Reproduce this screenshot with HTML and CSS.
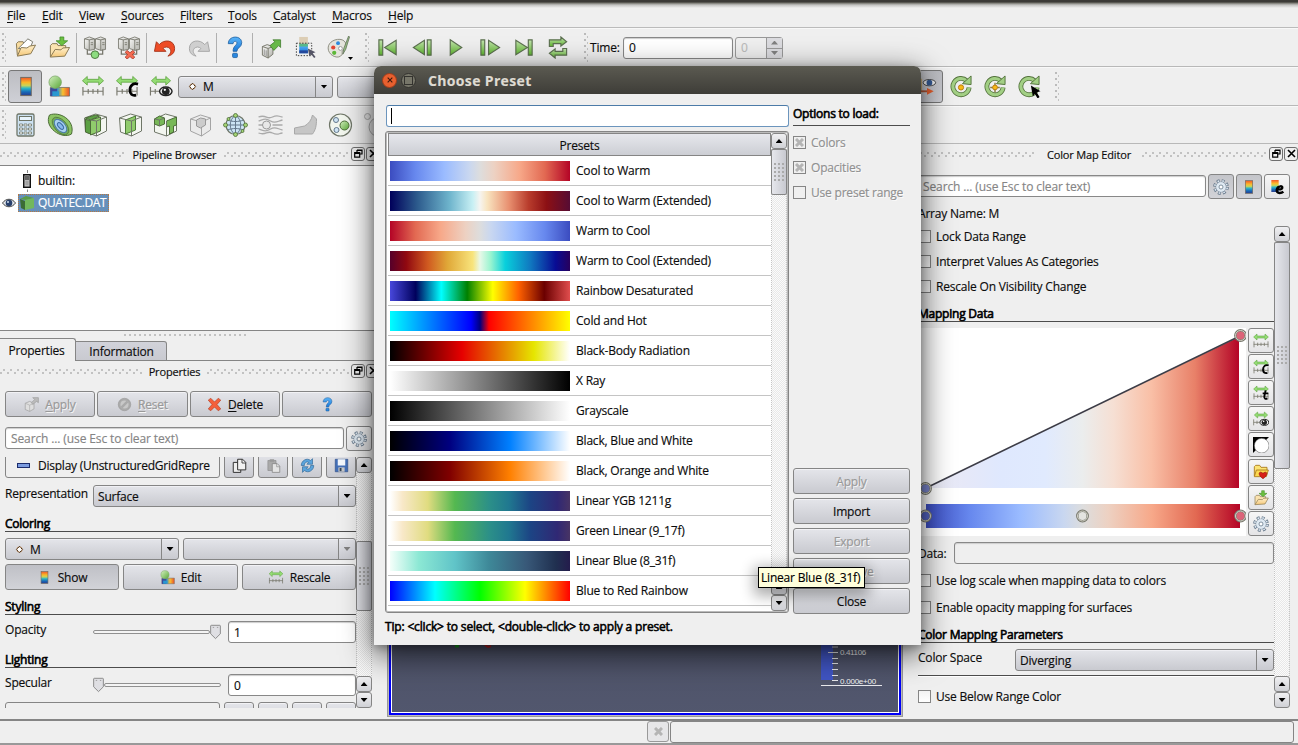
FILE: index.html
```html
<!DOCTYPE html>
<html lang="en">
<head>
<meta charset="utf-8">
<title>ParaView</title>
<link rel="stylesheet" href="styles.css">
</head>
<body>
<svg class="defs" width="0" height="0" aria-hidden="true">
  <defs>
    <linearGradient id="rain" x1="0" y1="0" x2="0" y2="1"><stop offset="0" stop-color="#f0562a"/><stop offset=".28" stop-color="#fbb829"/><stop offset=".45" stop-color="#c8d45a"/><stop offset=".6" stop-color="#2cb6c8"/><stop offset=".8" stop-color="#1668b8"/><stop offset="1" stop-color="#2a3c8c"/></linearGradient>
    <linearGradient id="rainh"><stop offset="0" stop-color="#3b3f9c"/><stop offset=".35" stop-color="#2a8fd0"/><stop offset=".65" stop-color="#f9c030"/><stop offset="1" stop-color="#e8502a"/></linearGradient>
    <linearGradient id="grn" x1="0" y1="0" x2="1" y2="1"><stop offset="0" stop-color="#d4f0c0"/><stop offset="1" stop-color="#5aa838"/></linearGradient>
    <linearGradient id="play" x1="0" y1="0" x2="0" y2="1"><stop offset="0" stop-color="#c4e4b0"/><stop offset="1" stop-color="#5eb52e"/></linearGradient>
    <linearGradient id="fold" x1="0" y1="0" x2="0" y2="1"><stop offset="0" stop-color="#fff0cc"/><stop offset="1" stop-color="#f5c878"/></linearGradient>
    <linearGradient id="gry" x1="0" y1="0" x2="1" y2="1"><stop offset="0" stop-color="#f8f8f6"/><stop offset="1" stop-color="#b4b4ae"/></linearGradient>
    <linearGradient id="blu" x1="0" y1="0" x2="0" y2="1"><stop offset="0" stop-color="#5ab4f8"/><stop offset="1" stop-color="#1a78d8"/></linearGradient>
    <linearGradient id="cw"><stop offset="0" stop-color="#3b4cc0"/><stop offset=".14" stop-color="#6788ee"/><stop offset=".3" stop-color="#9abbff"/><stop offset=".44" stop-color="#c9d7f0"/><stop offset=".5" stop-color="#ddd"/><stop offset=".58" stop-color="#edd1c2"/><stop offset=".72" stop-color="#f7a889"/><stop offset=".86" stop-color="#e26952"/><stop offset="1" stop-color="#b40426"/></linearGradient>
    <linearGradient id="cwa"><stop offset="0" stop-color="#ececf6"/><stop offset=".12" stop-color="#e6e8f8"/><stop offset=".24" stop-color="#dfe8fe"/><stop offset=".38" stop-color="#e0eafe"/><stop offset=".5" stop-color="#ebeded"/><stop offset=".6" stop-color="#f6dfd3"/><stop offset=".72" stop-color="#f9bfa6"/><stop offset=".86" stop-color="#e88068"/><stop offset="1" stop-color="#b40426"/></linearGradient>
  </defs>
  <symbol id="open" viewBox="0 0 24 24"><path d="M4 20 3 8l2-2h5l1 2" fill="#f8dca0" stroke="#87764f"/><path d="M5 13 15 3l5 3-3 8z" fill="#fff" stroke="#77776c"/><path d="M4 21 8 12l6 .5 3-2 6-1-5 9z" fill="url(#fold)" stroke="#87764f"/></symbol>
  <symbol id="load" viewBox="0 0 24 24"><path d="M3 22V10l2-2h5l1 2h8v3" fill="#fbe3b0" stroke="#87764f"/><path d="M3 22 8 14l6 .5 2-2 7-.5-5 9z" fill="url(#fold)" stroke="#87764f"/><path d="M13 1h4v4h4l-6 5-6-5h4z" fill="#6cc040" stroke="#3d8a26" stroke-width=".8"/></symbol>
  <symbol id="servers" viewBox="0 0 24 24"><g stroke="#77776c" stroke-width=".9"><path d="M1 3 6 1l5.500 2v11L6 15l-5-2z" fill="url(#gry)"/><path d="M12.500 3 18 1l5 2v11l-5 1-5.500-2z" fill="url(#gry)"/><path d="M6 4v11M18 4v11M1 3l5 1 5.500-1M12.500 3l5.500 1 5-1M7.500 7h2.500M19.500 7h2.500M7.500 9h2.500M19.500 9h2.500" fill="none"/><path d="M4 14v5h16v-5" fill="none" stroke-width="1.300"/></g></symbol>
  <symbol id="connect" viewBox="0 0 24 24"><use href="#servers"/><circle cx="12" cy="19.500" r="4" fill="#8cdc80" stroke="#4c7840"/></symbol>
  <symbol id="disconnect" viewBox="0 0 24 24"><use href="#servers"/><path d="m8 17 2-2 3 2.500L16 15l2 2-2.500 2.500L18 22l-2 2-3-2.500-3 2.500-2-2 2.500-2.500z" fill="#f46a50" stroke="#a83020" stroke-width=".8"/></symbol>
  <symbol id="undo" viewBox="0 0 24 24"><path d="M1 16 3 6l3 3c5-6 16-5 16 4 0 5-3 7-7 8 3-3 4-5 2-8-2-2-5-2-7 0l3 3z" fill="#ee4c26" stroke="#a8361c"/></symbol>
  <symbol id="redo" viewBox="0 0 24 24"><path d="M23 16 21 6l-3 3C13 3 2 4 2 13c0 5 3 7 7 8-3-3-4-5-2-8 2-2 5-2 7 0l-3 3z" fill="#cfcfcf" stroke="#a5a5a5"/></symbol>
  <symbol id="help" viewBox="0 0 24 24"><path d="M5 8c0-9 14-9 14-1 0 5-5 5-5 9h-4c0-6 4-6 4-9 0-2-4-2-4 1z" fill="url(#blu)" stroke="#1c5c9c" stroke-width=".8"/><rect x="9.500" y="18" width="5" height="4.500" rx="1" fill="#2a88e0" stroke="#1c5c9c" stroke-width=".8"/></symbol>
  <symbol id="extract" viewBox="0 0 24 24"><path d="m3 11 5-2 6 2v8l-5 4-6-3z" fill="url(#gry)" stroke="#77776c"/><path d="m3 11 6 2 5-2M9 13v10" fill="none" stroke="#77776c"/><path d="M5 14v6M7 15v6" stroke="#999"/><path d="m11 10 5-4-2-2h8v8l-2-2-5 5z" fill="#67b848" stroke="#3d7a2a" stroke-width=".8"/></symbol>
  <symbol id="select" viewBox="0 0 24 24"><rect x="6" y="1" width="9" height="8" fill="#dccdb4"/><rect x="6" y="9" width="9" height="9" fill="url(#blu)"/><rect x="6" y="8" width="9" height="3" fill="#58b888"/><rect x="6" y="15" width="9" height="3" fill="#24489c"/><path d="M3 7.500h16v13H3z" fill="none" stroke="#333" stroke-dasharray="1.500 1.500"/><path d="m15 13 8 4-3 1 3 4-1.500 1-3-4-2 2z" fill="#556"/></symbol>
  <symbol id="palette" viewBox="0 0 24 24"><path d="M1 15C-1 8 6 3 13 3.500c7 .5 8 8 4 11-3 1-1 3-2 5-3 5-12 2-14-4.500z" fill="#e4e4dc" stroke="#8c8c80"/><circle cx="6" cy="12" r="2.200" fill="#e44430"/><circle cx="11" cy="7.500" r="2" fill="#2b8ae0"/><circle cx="7" cy="17.500" r="2.200" fill="#5cb838"/><circle cx="13.500" cy="13" r="2" fill="#fff" stroke="#999"/><path d="m22 0-5 13-1 6 3-5 4-13z" fill="#96bc84" stroke="#55644c" stroke-width=".7"/></symbol>
  <symbol id="play1" viewBox="0 0 24 24"><path d="m6 4 12 8-12 8z" fill="url(#play)" stroke="#5c7050" stroke-width="1.200"/></symbol>
  <symbol id="first" viewBox="0 0 24 24"><path d="M2.500 4h4v16h-4zM20.500 4.500v15L8.500 12z" fill="url(#play)" stroke="#5c7050" stroke-width="1.200"/></symbol>
  <symbol id="back" viewBox="0 0 24 24"><path d="M17.500 4h4v16h-4zM14.500 4.500v15L3 12z" fill="url(#play)" stroke="#5c7050" stroke-width="1.200"/></symbol>
  <symbol id="fwd" viewBox="0 0 24 24"><path d="M2.500 4h4v16h-4zM10.500 4.500v15L22 12z" fill="url(#play)" stroke="#5c7050" stroke-width="1.200"/></symbol>
  <symbol id="last" viewBox="0 0 24 24"><path d="M16.500 4h4v16h-4zM3.500 4.500v15L15.500 12z" fill="url(#play)" stroke="#5c7050" stroke-width="1.200"/></symbol>
  <symbol id="loop" viewBox="0 0 24 24"><path d="M3 11V4h12V1l6 5-6 4.500V8H7v3z" fill="url(#play)" stroke="#5c7050" stroke-width="1.200"/><path d="M21 13v7H9v3l-6-5 6-4.500V16h8v-3z" fill="url(#play)" stroke="#5c7050" stroke-width="1.200"/></symbol>
  <symbol id="bar" viewBox="0 0 24 24"><rect x="6.500" y="2.500" width="11" height="19" fill="url(#rain)" stroke="#6f6a60"/></symbol>
  <symbol id="editmap" viewBox="0 0 24 24"><path d="M3 13h20v9H3z" fill="url(#rainh)" stroke="#6f6a60" stroke-width=".8"/><path d="M3 14h7v8H3z" fill="#3b4a9c"/><path d="M5 17h7v5H5z" fill="#2a98d0"/><circle cx="8" cy="7.500" r="6.500" fill="url(#grn)" stroke="#7ca868" stroke-width=".8"/></symbol>
  <symbol id="range" viewBox="0 0 24 24"><path d="m1 6 5-4.500v3h12v-3L23 6l-5 4.500v-3H6v3z" fill="#94dc74" stroke="#58a038" stroke-width=".8"/><path d="M1.500 12.500v9M22.500 12.500v9M1 17h22M7 14.500v5M12 14.500v5M17 14.500v5" fill="none" stroke="#77776c" stroke-width="1.200"/></symbol>
  <symbol id="rangec" viewBox="0 0 24 24"><use href="#range"/><path d="M23.500 9.500c-5-1.500-8.500 1.500-8.500 6.500 0 4 2.500 6 6.500 5" fill="none" stroke="#000" stroke-width="2.800"/></symbol>
  <symbol id="ranget" viewBox="0 0 24 24"><use href="#range"/><path d="m19 8-2 9c-.5 4 2 4.500 4.500 3M14.500 12.500H23" fill="none" stroke="#000" stroke-width="2.800"/></symbol>
  <symbol id="rangeeye" viewBox="0 0 24 24"><path d="m2 6 5-4.500v3h10v-3L22 6l-5 4.500v-3H7v3z" fill="#94dc74" stroke="#58a038" stroke-width=".8"/><path d="M1 12.500v9M1 17h9M6 14.500v5" fill="none" stroke="#77776c" stroke-width="1.200"/><ellipse cx="17" cy="17" rx="6.500" ry="4.500" fill="#eee" stroke="#222" stroke-width="1.500"/><circle cx="17" cy="17" r="4" fill="#222"/><circle cx="16" cy="15.500" r="1.200" fill="#fff"/></symbol>
  <symbol id="calc" viewBox="0 0 24 24"><rect x="3.500" y="1" width="17" height="22" rx="1.500" fill="#cde2f2" stroke="#6f7668" stroke-width="1.300"/><rect x="6" y="3.500" width="12" height="4" fill="#e8f4fc" stroke="#6f7668"/><path d="M6 11h3v2H6zm4.500 0h3v2h-3zm4.500 0h3v2h-3zM6 15h3v2H6zm4.500 0h3v2h-3zm4.500 0h3v2h-3zM6 19h3v2H6zm4.500 0h3v2h-3zm4.500 0h3v2h-3z" fill="#fff" stroke="#6f7668" stroke-width=".8"/></symbol>
  <symbol id="contour" viewBox="0 0 24 24"><path d="M1 2C11-2 27 7 23 21 13 27-5 14 1 2z" fill="#8cc464" stroke="#4c6c38"/><ellipse cx="12" cy="13" rx="10.500" ry="6" transform="rotate(48 12 13)" fill="#74b058" stroke="#4c6c38" stroke-width=".7"/><ellipse cx="12" cy="13" rx="8" ry="4.500" transform="rotate(48 12 13)" fill="#a8d0f0" stroke="#4878a8"/><ellipse cx="12" cy="13" rx="4" ry="2" transform="rotate(48 12 13)" fill="#88b8ec" stroke="#3868a0"/></symbol>
  <symbol id="clip" viewBox="0 0 24 24"><path d="m1 5 11-4 11 3v14l-10 5-11-4z" fill="#f3f6f0" stroke="#6f7668"/><path d="m2 6 5 2v13l-5-2zM2 5l10-3 4 1-9 4z" fill="#5ca044" stroke="#4c6c38"/><path d="m7 7 10-3v14l-10 4z" fill="#90cc6c" stroke="#4c6c38"/><path d="m13 8 10-4M13 8v15M7 7l6 1" fill="none" stroke="#6f7668"/></symbol>
  <symbol id="slice" viewBox="0 0 24 24"><path d="m1 5 11-4 11 3v14l-10 5-11-4z" fill="#f3f6f0" stroke="#6f7668"/><path d="m7 7 10-4v14L7 21z" fill="#90cc6c" stroke="#4c7c38"/><path d="m1 5 12 3 10-4M13 8v15" fill="none" stroke="#6f7668"/></symbol>
  <symbol id="thresh" viewBox="0 0 24 24"><path d="m1 6 11-5 11 3v14l-10 5-12-4z" fill="#f3f6f0" stroke="#6f7668"/><path d="m1 6 5-3 5 2v6l-5 2-5-2zM13 8l10-4v8l-3 1v6l-4 2v-8l-3 1z" fill="#78b858" stroke="#4c6c38"/><path d="m1 6 5 1 5-2M6 7v6M13 8v15" fill="none" stroke="#6f7668"/></symbol>
  <symbol id="subset" viewBox="0 0 24 24"><path d="m2 6 10-4 10 3v12l-9 6-11-5zM2 6l11 3 9-4M13 9v14" fill="#ebebeb" stroke="#a4a4a4"/><path d="m8 7 4-2 5 1v6l-5 3-4-2z" fill="#ccc" stroke="#999"/></symbol>
  <symbol id="glyph" viewBox="0 0 24 24"><circle cx="12" cy="12" r="9.500" fill="#cce4f4" stroke="#6f7668" stroke-width="1.200"/><path d="M2.500 12h19M12 2v20M12 2c-7 5-7 15 0 20M12 2c7 5 7 15 0 20M4 7c5 2 11 2 16 0M4 17c5-2 11-2 16 0" fill="none" stroke="#64788c"/><g fill="#a4d474" stroke="#4c6c38" stroke-width=".8"><circle cx="12" cy="2.500" r="2"/><circle cx="12" cy="21.500" r="2"/><circle cx="2" cy="12" r="2"/><circle cx="22" cy="12" r="2"/><circle cx="5" cy="6" r="1.500"/><circle cx="19" cy="18" r="1.500"/></g></symbol>
  <symbol id="stream" viewBox="0 0 24 24"><path d="M0 4c8-3 8 3 14 0s6 0 10 0M0 8c6-2 7-3 12 0s7 0 12-1M0 20c8 3 8-3 14 0s6 0 10 0M0 16c6 2 7 3 12 0s7 0 12 1M14 12h10M0 12h5" fill="none" stroke="#aaa" stroke-width="1.300"/><circle cx="8" cy="12" r="4" fill="#e8e8e8" stroke="#999"/></symbol>
  <symbol id="warp" viewBox="0 0 24 24"><path d="m1 15 10-2c4-2 7-6 8-11l4 4c0 7-1 11-4 15H1z" fill="#c6c6c6" stroke="#a8a8a8"/></symbol>
  <symbol id="group" viewBox="0 0 24 24"><circle cx="12" cy="12" r="11" fill="#f2f6ee" stroke="#6f7668" stroke-width="1.200"/><circle cx="16" cy="12.500" r="4.500" fill="url(#grn)" stroke="#4c6c38"/><circle cx="7.500" cy="7" r="2.500" fill="#cfe4f4" stroke="#64788c"/><circle cx="8" cy="17" r="2.500" fill="#cfe4f4" stroke="#64788c"/></symbol>
  <symbol id="level" viewBox="0 0 24 24"><circle cx="4" cy="3.500" r="3" fill="#e6e6e6" stroke="#aaa"/><circle cx="15" cy="14" r="9.500" fill="#e6e6e6" stroke="#aaa"/></symbol>
  <symbol id="axes" viewBox="0 0 24 24"><path d="M5 4v13M5 17l-5 5" fill="none" stroke="#c89830" stroke-width="2.600"/><path d="M5 17h9" stroke="#b05838" stroke-width="2"/><path d="m12 13.500 7 3.500-7 3.500z" fill="#e86030"/><path d="m1 18 4 3-6 2z" fill="#68a840"/><ellipse cx="14.500" cy="8" rx="6.500" ry="3.300" fill="#eee" stroke="#222" stroke-width=".8"/><circle cx="14.500" cy="8" r="3" fill="#345890"/></symbol>
  <symbol id="ring" viewBox="0 0 24 24"><path d="M18 6A8.500 8.500 0 1 0 20.500 13" fill="none" stroke="#55743e" stroke-width="5"/><path d="M18 6A8.500 8.500 0 1 0 20.500 13" fill="none" stroke="#a2cf84" stroke-width="3.200"/><path d="m13.500 9 9 1V1z" fill="#a2cf84" stroke="#55743e"/></symbol>
  <symbol id="center1" viewBox="0 0 24 24"><use href="#ring"/><circle cx="12" cy="13" r="2.700" fill="#f8b818" stroke="#b87c10"/></symbol>
  <symbol id="center2" viewBox="0 0 24 24"><use href="#ring"/><path d="M12 8v10M7 13h10" stroke="#8c7c44" stroke-width="1.500"/><circle cx="12" cy="13" r="2.500" fill="#f8b818" stroke="#b87c10"/></symbol>
  <symbol id="center3" viewBox="0 0 24 24"><use href="#ring"/><path d="m14 11 10 6-4 1 3 5-2 1.500-3-5-2 3z" fill="#000"/></symbol>
  <symbol id="gear" viewBox="0 0 24 24"><circle cx="12" cy="12" r="9.500" fill="none" stroke="#66788a" stroke-width="4.500" stroke-dasharray="4.200 3.260"/><circle cx="12" cy="12" r="9.300" fill="none" stroke="#dfe9f2" stroke-width="2.600" stroke-dasharray="2.400 4.904" stroke-dashoffset="-.9"/><circle cx="12" cy="12" r="7.500" fill="#dfe9f2" stroke="#7c8ea0"/><circle cx="12" cy="12" r="7" fill="#dfe9f2"/><circle cx="12" cy="12" r="3" fill="#fff" stroke="#66788a" stroke-width="1.200"/></symbol>
  <symbol id="mape" viewBox="0 0 24 24"><rect x="3.500" y="1.500" width="11" height="18" fill="url(#rain)"/><path d="M13 15.500c9 1 8-5 4-4.500-6 .5-8 10-1 10 2 0 4-.5 5.500-2" fill="none" stroke="#000" stroke-width="3.600"/></symbol>
  <symbol id="dot" viewBox="0 0 10 10"><circle cx="5" cy="5" r="3" fill="#fff" stroke="#c8884c"/><path d="M5 1.500 8.500 5 5 8.500 1.500 5z" fill="none" stroke="#000" stroke-dasharray="1.600 .9"/></symbol>
  <symbol id="float" viewBox="0 0 9 9"><path d="M3 1h5v4H6M3 1.500h5M3 1v2" fill="none" stroke="#000" stroke-width="1.200"/><path d="M.7 3.700h5v4.500h-5zM.7 4.300h5" fill="none" stroke="#000" stroke-width="1.200"/></symbol>
  <symbol id="x" viewBox="0 0 9 9"><path d="m1 1 7 7M8 1 1 8" stroke="#000" stroke-width="1.600"/></symbol>
  <symbol id="check" viewBox="0 0 9 9"><path d="m1 1 7 7M8 1 1 8" stroke="#b4b4b4" stroke-width="3"/></symbol>
  <symbol id="eye" viewBox="0 0 14 10"><path d="M.5 5C4 0 10 0 13.500 5 10 10 4 10 .5 5z" fill="#e4e8ec" stroke="#444"/><circle cx="7" cy="5" r="3.300" fill="#28406c"/><circle cx="6" cy="4" r="1" fill="#cde"/></symbol>
  <symbol id="server" viewBox="0 0 8 22"><path d="M4.500 0v3M4.500 19.500v2.500" stroke="#888"/><rect x=".7" y="4.700" width="6.600" height="12.600" fill="#bbb" stroke="#111" stroke-width="1.400"/><path d="M2 7h4M2 9h4" stroke="#111" stroke-width="1.200"/><path d="M2.500 12h3M2.500 14h3" stroke="#888"/></symbol>
  <symbol id="cube" viewBox="0 0 16 16"><path d="m1 4 6-3 8 2-8 2z" fill="#5a9c48"/><path d="m1 4 5 2v9l-4-2z" fill="#3c6c34"/><path d="m6 5 9-2v10l-9 2z" fill="#72b85c"/></symbol>
  <symbol id="applyi" viewBox="0 0 24 24"><path d="m2 10 7-3 7 3v9l-7 4-7-3z" fill="#dedede" stroke="#999"/><path d="m2 10 7 3 7-3M9 13v10" fill="none" stroke="#aaa"/><path d="m12 9 5-5-3-3h9v8l-3-2-6 5z" fill="#bbb" stroke="#999"/></symbol>
  <symbol id="reseti" viewBox="0 0 24 24"><circle cx="12" cy="12" r="10" fill="#aaa" stroke="#999"/><circle cx="12" cy="12" r="6.500" fill="#c8c8c8"/><path d="m7 17 10-10" stroke="#aaa" stroke-width="4"/></symbol>
  <symbol id="deletei" viewBox="0 0 24 24"><path d="m2 5 4-3 6 6 6-6 4 3-6 7 6 7-4 3-6-6-6 6-4-3 6-7z" fill="#f4603c" stroke="#b03c20"/></symbol>
  <symbol id="copy" viewBox="0 0 24 24"><path d="M2 7h8l4 4v12H2z" fill="#eee" stroke="#333" stroke-width="1.600"/><path d="M9 2h8l5 5v12H9z" fill="#f2f2f2" stroke="#333" stroke-width="1.600"/><path d="M16 2v6h6" fill="none" stroke="#333" stroke-width="1.400"/></symbol>
  <symbol id="paste" viewBox="0 0 24 24"><path d="M3 4h13v16H3z" fill="#aaa" stroke="#888"/><path d="M6 2h7v4H6z" fill="#999"/><path d="M10 9h8l4 4v10H10z" fill="#e4e4e4" stroke="#888" stroke-width="1.300"/><path d="M17 9v5h5" fill="none" stroke="#888"/></symbol>
  <symbol id="reload" viewBox="0 0 24 24"><path d="M2 12C2 4 11-1 17 4l3-3v9h-9l3-3c-4-2-7 1-7 5z" fill="#5ba4dc" stroke="#2c6494"/><path d="M22 12c0 8-9 13-15 8l-3 3v-9h9l-3 3c4 2 7-1 7-5z" fill="#5ba4dc" stroke="#2c6494"/></symbol>
  <symbol id="save" viewBox="0 0 24 24"><path d="M2 2h20v20H2z" fill="#4470b8" stroke="#2c4c84"/><path d="M6 2h12v10H6z" fill="#f4f8fc"/><path d="M7 15h10v7H7z" fill="#c8c8c8"/><path d="M9 16h3v5H9z" fill="#345"/></symbol>
  <symbol id="circ" viewBox="0 0 24 24"><path d="M0 0h24L21 3 3 21l-3 3z" fill="#000"/><circle cx="13" cy="13" r="11" fill="#fff" stroke="#444" stroke-width=".7"/></symbol>
  <symbol id="fav" viewBox="0 0 24 24"><path d="M2 18V4l2-2h6l2 3h9v5" fill="#fce474" stroke="#a8781c" stroke-width="1.300"/><path d="M2 19 5 9h18l-3 10z" fill="#fcd850" stroke="#a8781c" stroke-width="1.300"/><path d="M15 22c-9-6-6-13 0-8 6-5 9 2 0 8z" fill="#d82018" stroke="#901008"/></symbol>
  <symbol id="thumb" viewBox="0 0 12 16"><path d="M1.500.7h9q.8 0 .8.8v8.500L6 15.200.7 10V1.500q0-.8.8-.8z" fill="#dfdfe3" stroke="#838383"/><path d="M3 3h1.500M7.500 3H9" stroke="#999"/></symbol>
</svg>

<div class="app">
  <div class="titleedge"></div>
  <nav class="menu">
    <span class="m1"><u>F</u>ile</span><span class="m2"><u>E</u>dit</span><span class="m3"><u>V</u>iew</span><span class="m4"><u>S</u>ources</span><span class="m5"><u>F</u>ilters</span><span class="m6"><u>T</u>ools</span><span class="m7"><u>C</u>atalyst</span><span class="m8"><u>M</u>acros</span><span class="m9"><u>H</u>elp</span>
  </nav>
  <div class="toolbar">
    <i class="grip"></i>
    <svg class="ic"><use href="#open"/></svg><svg class="ic"><use href="#load"/></svg><i class="sep"></i>
    <svg class="ic"><use href="#connect"/></svg><svg class="ic"><use href="#disconnect"/></svg><i class="sep"></i>
    <svg class="ic"><use href="#undo"/></svg><svg class="ic"><use href="#redo"/></svg><i class="sep"></i>
    <svg class="ic"><use href="#help"/></svg><i class="sep"></i>
    <svg class="ic"><use href="#extract"/></svg><svg class="ic"><use href="#select"/></svg><svg class="ic"><use href="#palette"/></svg><i class="tri drop"></i>
    <i class="grip g2"></i>
    <svg class="ic"><use href="#first"/></svg><svg class="ic"><use href="#back"/></svg><svg class="ic"><use href="#play1"/></svg><svg class="ic"><use href="#fwd"/></svg><svg class="ic"><use href="#last"/></svg><svg class="ic"><use href="#loop"/></svg>
    <i class="grip g3"></i>
    <span class="time">Time:</span><div class="field timef">0</div>
    <div class="spin"><span>0</span><div><b><i class="tri up off"></i></b><b><i class="tri off"></i></b></div></div>
  </div>
  <div class="toolbar">
    <i class="grip"></i>
    <div class="tbtn on"><svg class="ic"><use href="#bar"/></svg></div>
    <svg class="ic"><use href="#editmap"/></svg><svg class="ic"><use href="#range"/></svg><svg class="ic"><use href="#rangec"/></svg><svg class="ic"><use href="#rangeeye"/></svg>
    <div class="combo c1"><svg class="dot"><use href="#dot"/></svg><span>M</span><b><i class="tri"></i></b></div>
    <div class="combo c2"></div>
    <div class="tbtn on axes"><svg class="ic"><use href="#axes"/></svg></div>
    <svg class="ic"><use href="#center1"/></svg><svg class="ic"><use href="#center2"/></svg><svg class="ic"><use href="#center3"/></svg>
    <i class="grip g4"></i>
  </div>
  <div class="toolbar filters">
    <i class="grip"></i>
    <svg class="ic"><use href="#calc"/></svg><svg class="ic"><use href="#contour"/></svg><svg class="ic"><use href="#clip"/></svg><svg class="ic"><use href="#slice"/></svg><svg class="ic"><use href="#thresh"/></svg><svg class="ic"><use href="#subset"/></svg><svg class="ic"><use href="#glyph"/></svg><svg class="ic"><use href="#stream"/></svg><svg class="ic"><use href="#warp"/></svg><svg class="ic"><use href="#group"/></svg><svg class="ic"><use href="#level"/></svg>
  </div>

  <main class="main">
    <section class="left">
      <div class="docktitle"><i class="dots"></i><span class="t1">Pipeline Browser</span><i class="dots"></i><b class="dbtn"><svg><use href="#float"/></svg></b><b class="dbtn"><svg><use href="#x"/></svg></b></div>
      <div class="tree">
        <div class="trow"><svg class="server"><use href="#server"/></svg><span>builtin:</span></div>
        <div class="trow"><svg class="eye"><use href="#eye"/></svg><div class="sel"><svg class="cube"><use href="#cube"/></svg><span>QUATEC.DAT</span></div></div>
      </div>
      <div class="split"><i class="dots"></i></div>
      <div class="tabs"><div class="tab act">Properties</div><div class="tab">Information</div><div class="rest"></div></div>
      <div class="docktitle"><i class="dots"></i><span class="t2">Properties</span><i class="dots"></i><b class="dbtn"><svg><use href="#float"/></svg></b><b class="dbtn"><svg><use href="#x"/></svg></b></div>
      <div class="acts">
        <div class="btn off"><svg><use href="#applyi"/></svg><span><u>A</u>pply</span></div>
        <div class="btn off"><svg><use href="#reseti"/></svg><span><u>R</u>eset</span></div>
        <div class="btn"><svg><use href="#deletei"/></svg><span><u>D</u>elete</span></div>
        <div class="btn"><svg><use href="#help"/></svg></div>
      </div>
      <div class="searchrow"><div class="field ph">Search ... (use Esc to clear text)</div><div class="sq"><svg><use href="#gear"/></svg></div></div>
      <div class="scroll">
        <div class="props">
          <div class="disp"><div class="group"><i class="minus"></i><span>Display (UnstructuredGridRepre</span></div><div class="btn"><svg><use href="#copy"/></svg></div><div class="btn"><svg><use href="#paste"/></svg></div><div class="btn"><svg><use href="#reload"/></svg></div><div class="btn"><svg><use href="#save"/></svg></div></div>
          <div class="prow"><label>Representation</label><div class="combo wide"><span>Surface</span><b><i class="tri"></i></b></div></div>
          <h4>Coloring</h4>
          <div class="two"><div class="combo"><svg class="dot"><use href="#dot"/></svg><span>M</span><b><i class="tri"></i></b></div><div class="combo"><span></span><b><i class="tri off"></i></b></div></div>
          <div class="three"><div class="btn on"><svg><use href="#bar"/></svg><span>Show</span></div><div class="btn"><svg><use href="#editmap"/></svg><span>Edit</span></div><div class="btn"><svg class="rg"><use href="#range"/></svg><span>Rescale</span></div></div>
          <h4>Styling</h4>
          <div class="prow"><label>Opacity</label><div class="slider end"><i></i><svg><use href="#thumb"/></svg></div><div class="field val">1</div></div>
          <h4>Lighting</h4>
          <div class="prow"><label>Specular</label><div class="slider"><i></i><svg><use href="#thumb"/></svg></div><div class="field val">0</div></div>
          <div class="disp low"><div class="group"></div><div class="btn"></div><div class="btn"></div><div class="btn"></div><div class="btn"></div></div>
        </div>
        <div class="sbar"><b><i class="tri up"></i></b><div class="track"><div class="handle h1"><i></i></div></div><b><i class="tri up"></i></b><b><i class="tri"></i></b></div>
      </div>
    </section>

    <section class="view">
      <div class="canvas">
        <svg width="508" height="80" viewBox="391 633 508 80">
          <rect x="455" y="640" width="4" height="8.500" fill="#18a020"/><path d="M460 645.500h28" stroke="#333" stroke-width="1"/><path d="m485 646 3 2 3-1" fill="none" stroke="#c02020" stroke-width="2"/>
          <rect x="821" y="633" width="12" height="48" fill="#4055c4"/>
          <path d="M832 648h6M828 653.500h10M832 659.500h6M832 664.500h6M832 670.500h6M832 676.500h6M832 681.500h6M821 686.500h61" stroke="#e8e8ec"/>
          <text class="tick" x="840" y="655.500" textLength="26">0.41106</text><text class="tick" x="840" y="684.500" textLength="36">0.000e+00</text>
        </svg>
      </div>
    </section>

    <section class="right">
      <div class="docktitle"><i class="dots"></i><span class="t3">Color Map Editor</span><i class="dots"></i><b class="dbtn"><svg><use href="#float"/></svg></b><b class="dbtn"><svg><use href="#x"/></svg></b></div>
      <div class="searchrow"><div class="field ph">Search ... (use Esc to clear text)</div><div class="sq on"><svg><use href="#gear"/></svg></div><div class="sq on"><svg><use href="#bar"/></svg></div><div class="sq"><svg><use href="#mape"/></svg></div></div>
      <div class="arr">Array Name: M</div>
      <div class="scroll">
        <div class="cme">
          <div class="chk"><i></i>Lock Data Range</div>
          <div class="chk"><i></i>Interpret Values As Categories</div>
          <div class="chk"><i></i>Rescale On Visibility Change</div>
          <h4>Mapping Data</h4>
          <div class="mapping">
            <svg class="chart" width="328" height="208" viewBox="918 328 328 208">
              <rect x="918" y="328" width="328" height="208" fill="#fff"/>
              <path d="M926 488 1239 337V488z" fill="url(#cwa)"/>
              <path d="M926 488 1240 336" stroke="#3c3c46" stroke-width="1.600"/>
              <rect x="926" y="504" width="314" height="24" fill="url(#cw)"/>
              <g stroke-width="2.400" stroke="#77776c">
                <circle cx="925.500" cy="488.500" r="5.200" fill="#7c88d0"/><circle cx="925.500" cy="516" r="5.200" fill="#5666c4"/><circle cx="1240.500" cy="335.500" r="5.200" fill="#dc6478"/><circle cx="1240.500" cy="516" r="5.200" fill="#dc6478"/><circle cx="1082.500" cy="516" r="5.200" fill="#e4e4e0"/>
              </g>
              <g stroke="#d4d4c8" fill="none" stroke-width="1"><circle cx="925.500" cy="488.500" r="5"/><circle cx="925.500" cy="516" r="5"/><circle cx="1240.500" cy="335.500" r="5"/><circle cx="1240.500" cy="516" r="5"/><circle cx="1082.500" cy="516" r="5"/></g>
            </svg>
            <div class="side">
              <div class="sq"><svg><use href="#range"/></svg></div><div class="sq"><svg><use href="#rangec"/></svg></div><div class="sq"><svg><use href="#ranget"/></svg></div><div class="sq"><svg><use href="#rangeeye"/></svg></div><div class="sq"><svg><use href="#circ"/></svg></div><div class="sq gap"><svg><use href="#fav"/></svg></div><div class="sq"><svg><use href="#load"/></svg></div><div class="sq"><svg><use href="#gear"/></svg></div>
            </div>
          </div>
          <div class="datarow"><label>Data:</label><div class="field flat"></div></div>
          <div class="chk tall first"><i></i>Use log scale when mapping data to colors</div>
          <div class="chk tall"><i></i>Enable opacity mapping for surfaces</div>
          <h4 class="h22">Color Mapping Parameters</h4>
          <div class="spacerow"><label>Color Space</label><div class="combo"><span>Diverging</span><b><i class="tri"></i></b></div></div>
          <div class="hr"></div>
          <div class="chk below"><i></i>Use Below Range Color</div>
        </div>
        <div class="sbar r"><b><i class="tri up"></i></b><div class="track"><div class="handle h2"><i></i></div></div><b><i class="tri up"></i></b><b><i class="tri"></i></b></div>
      </div>
    </section>
  </main>
  <footer class="status"><div class="abort"><svg><use href="#check"/></svg></div><div class="progress"></div></footer>
</div>

<div class="dialog">
  <div class="dtitle"><i class="close"><svg><use href="#x"/></svg></i><i class="max"></i><span>Choose Preset</span></div>
  <div class="dbody">
    <div class="dl">
      <div class="filter"><i></i></div>
      <div class="table">
        <div class="rows">
          <div class="th">Presets</div>
          <div class="pr"><i class="p1"></i>Cool to Warm</div>
          <div class="pr"><i class="p2"></i>Cool to Warm (Extended)</div>
          <div class="pr"><i class="p3"></i>Warm to Cool</div>
          <div class="pr"><i class="p4"></i>Warm to Cool (Extended)</div>
          <div class="pr"><i class="p5"></i>Rainbow Desaturated</div>
          <div class="pr"><i class="p6"></i>Cold and Hot</div>
          <div class="pr"><i class="p7"></i>Black-Body Radiation</div>
          <div class="pr"><i class="p8"></i>X Ray</div>
          <div class="pr"><i class="p9"></i>Grayscale</div>
          <div class="pr"><i class="p10"></i>Black, Blue and White</div>
          <div class="pr"><i class="p11"></i>Black, Orange and White</div>
          <div class="pr"><i class="p12"></i>Linear YGB 1211g</div>
          <div class="pr"><i class="p12"></i>Green Linear (9_17f)</div>
          <div class="pr"><i class="p14"></i>Linear Blue (8_31f)</div>
          <div class="pr"><i class="p15"></i>Blue to Red Rainbow</div>
          <div class="pr"><i class="p16"></i></div>
        </div>
        <div class="sbar d"><b><i class="tri up"></i></b><div class="track"><div class="handle h3"><i></i></div></div><b><i class="tri up"></i></b><b><i class="tri"></i></b></div>
      </div>
      <div class="tip">Tip: &lt;click&gt; to select, &lt;double-click&gt; to apply a preset.</div>
    </div>
    <div class="dr">
      <h4 class="opt">Options to load:</h4>
      <div class="chk off"><i><svg><use href="#check"/></svg></i>Colors</div>
      <div class="chk off"><i><svg><use href="#check"/></svg></i>Opacities</div>
      <div class="chk off"><i></i>Use preset range</div>
      <div class="dbtns"><div class="btn off">Apply</div><div class="btn">Import</div><div class="btn off">Export</div><div class="btn off">Remove</div><div class="btn">Close</div></div>
    </div>
  </div>
</div>
<div class="tooltip">Linear Blue (8_31f)</div>
</body>
</html>
```
FILE: styles.css
```css
* { box-sizing: border-box; }
body { margin: 0; width: 1298px; height: 745px; overflow: hidden; background: #efefef; color: #0c0c0c; font: 12px/16px "Open Sans", "Noto Sans", sans-serif; font-stretch: 90%; letter-spacing: -.2px; -webkit-text-stroke: .15px currentColor; white-space: nowrap; position: relative; }
.defs { position: absolute; }
i, b { font-style: normal; font-weight: normal; display: block; flex: none; }
svg { display: block; flex: none; }
u { text-underline-offset: 2px; }
.app { display: flex; flex-direction: column; height: 745px; }
.titleedge { height: 8px; flex: none; background: linear-gradient(#3c3b37 0 2px, #77766f 3px, #c4c4c2 5px, #efefef); }
.menu { height: 20px; flex: none; display: flex; align-items: center; padding: 0 0 4px 7px; border-bottom: 1px solid #bbb; }
.m1 { width: 35px; } .m2 { width: 37px; } .m3 { width: 42px; } .m4 { width: 59px; } .m5 { width: 48px; } .m6 { width: 45px; } .m7 { width: 59px; } .m8 { width: 56px; }

.toolbar { height: 39px; flex: none; display: flex; align-items: center; border-bottom: 1px solid #b8b8b8; border-top: 1px solid #f8f8f8; }
.toolbar.filters { height: 38px; }
.ic { width: 34px; height: 23px; }
.filters .ic { width: 35px; height: 24px; }
.grip { width: 4px; height: 30px; margin: 0 2px; background: radial-gradient(circle at 1px 1px, #bbb 1px, transparent 1.3px) 0 0/6px 6px, radial-gradient(circle at 1px 1px, #c4c4c4 1px, transparent 1.3px) 3px 3px/6px 6px; }
.grip.g3 { margin: 0 0 0 9px; }
.grip.g4 { margin-left: 9px; }
.sep { width: 1px; height: 30px; background: #b0b0b0; margin-right: 1px; }
.tri { width: 7px; height: 4px; background: #000; clip-path: polygon(0 0, 100% 0, 50% 100%); }
.tri.up { clip-path: polygon(50% 0, 100% 100%, 0 100%); }
.tri.off { background: #808080; }
.drop { width: 5px; height: 3px; margin: 22px 0 0 -8px; padding: 0; }
.drop + .g2 { margin: 0 2px 0 12px; }
.time { width: 33px; margin-left: 2px; }
.field { height: 22px; border: 1px solid #888; border-radius: 3px; background: #fff; box-shadow: inset 0 1px 1px #ccc; padding: 2px 5px; }
.ph { color: #858585; letter-spacing: -.12px; padding-top: 3px; }
.timef { width: 110px; }
.spin { width: 48px; height: 22px; margin-left: 2px; border: 1px solid #999; border-radius: 3px; display: flex; color: #bbb; }
.spin span { flex: 1; padding: 2px 5px; }
.spin div { width: 16px; border-left: 1px solid #999; background: #dcdce0; }
.spin b { height: 10px; display: grid; place-items: center; }
.spin b + b { border-top: 1px solid #999; }
.tbtn { width: 34px; height: 33px; border: 1px solid #777; border-radius: 3px; background: linear-gradient(#bcbdc2, #cfd0d6); display: grid; place-items: center; }
.combo { height: 22px; border: 1px solid #858585; border-radius: 3px; display: flex; align-items: center; background: linear-gradient(#e4e5ea, #c9cad0); box-shadow: inset 0 1px 0 #f0f0f4; padding-left: 4px; }
.combo span { padding-top: 1px; }
.combo b { margin-left: auto; width: 17px; height: 20px; border-left: 1px solid #858585; display: grid; place-items: center; }
.dot { width: 9px; height: 9px; margin: 0 6px 0 5px; }
.c1 { width: 155px; }
.c2 { width: 150px; margin-left: 4px; }
.axes { margin-left: 422px; }
.axes + .ic { margin-left: 1px; }

.main { flex: 1; display: flex; min-height: 0; }
.left { width: 376px; display: flex; flex-direction: column; }
.docktitle { height: 21px; flex: none; display: flex; align-items: center; font-size: 11px; letter-spacing: -.15px; }
.docktitle span { text-align: center; padding-top: 1px; }
.dots { flex: 1; height: 5px; margin-top: -1px; background: radial-gradient(circle at 1px 1px, #c2c2c2 1px, transparent 1.3px) 0 3px/7px 7px, radial-gradient(circle at 1px 1px, #c2c2c2 1px, transparent 1.3px) 3px 0/7px 7px; }
.t1 { width: 99px; } .t2 { width: 64px; } .t3 { width: 102px; }
.dbtn { width: 14px; height: 14px; border: 1px solid #6f6f6f; border-radius: 3px; margin: -2px 0 0 1px; display: grid; place-items: center; }
.dbtn svg { width: 9px; height: 9px; }
.left .dots + .dbtn { margin-left: 2px; }
.left .docktitle { width: 380px; }
.tree { height: 166px; flex: none; background: #fff; border-top: 1px solid #858585; border-bottom: 1px solid #858585; padding-top: 4px; }
.trow { height: 22px; display: flex; align-items: center; }
.server { width: 8px; height: 22px; margin: 0 7px 0 23px; }
.eye { width: 14px; height: 10px; margin: 0 2px; }
.sel { height: 18px; width: 91px; background: #6690bb; outline: 1px dotted #b87840; outline-offset: -1px; color: #fff; display: flex; align-items: center; letter-spacing: -.45px; }
.cube { width: 16px; height: 16px; margin: 0 3px 0 1px; }
.split { height: 7px; flex: none; padding-top: 4px; }
.split .dots { width: 123px; height: 3px; margin: -1px 0 0 124px; background: radial-gradient(circle at 1px 1px, #c2c2c2 1px, transparent 1.3px) 0 0/5px 5px; }
.tabs { height: 23px; flex: none; display: flex; align-items: flex-end; }
.tab { width: 91px; height: 20px; border: 1px solid #858585; border-left: 0; border-radius: 0 3px 0 0; background: linear-gradient(#d2d3da, #c9cad0); text-align: center; padding: 2px 0 0 1px; }
.tab.act { width: 76px; height: 23px; border-bottom: 0; background: #efefef; padding: 4px 2px 0 0; }
.rest { flex: 1; align-self: stretch; border-bottom: 1px solid #858585; }
.acts { margin: 9px 4px 0 5px; height: 26px; flex: none; display: grid; grid-template-columns: 90px 91px 90px 90px; gap: 2px; }
.acts span { padding-top: 1px; }
.btn { border: 1px solid #858585; border-radius: 3px; background: linear-gradient(#e4e5ea, #c9cad0); box-shadow: inset 0 1px 0 #f2f2f5; display: flex; align-items: center; justify-content: center; gap: 6px; }
.btn.on { background: linear-gradient(#bfc0c6, #d2d3d8); box-shadow: none; }
.btn.off { color: #999; text-shadow: 1px 1px #f6f6f6; }
.btn svg { width: 15px; height: 15px; }
.searchrow { display: flex; flex: none; align-items: flex-start; gap: 2px; }
.searchrow .field { flex: 1; margin-top: 1px; }
.sq { width: 26px; height: 25px; border: 1px solid #858585; border-radius: 3px; background: linear-gradient(#f6f6f6, #e4e4e6); display: grid; place-items: center; }
.sq.on { background: linear-gradient(#c4c5ca, #d2d3d8); }
.sq svg { width: 16px; height: 16px; }
.left .searchrow { height: 25px; margin: 9px 4px 6px 5px; }
.scroll { display: flex; flex: none; height: 251px; overflow: hidden; }
.left .scroll { margin-left: 5px; }
.props { width: 351px; height: 251px; overflow: hidden; }
.disp { height: 21px; overflow: hidden; display: flex; align-items: flex-end; gap: 4px; margin-bottom: 7px; }
.disp .group { width: 215px; height: 26px; border: 1px solid #858585; border-radius: 3px; display: flex; align-items: center; gap: 8px; padding-left: 11px; flex: none; }
.disp .group span { width: 178px; letter-spacing: -.24px; padding-top: 1px; }
.disp .btn { width: 30px; height: 26px; flex: none; }
.disp.low { align-items: flex-start; margin: 6px 0 0; }
.minus { width: 13px; height: 5px; border: 1px solid #1c2c6c; background: #7c9ce0; }
.prow { height: 22px; display: flex; align-items: center; }
.prow label { width: 88px; padding-bottom: 4px; }
.wide { width: 263px; }
h4 { font-weight: normal; margin: 0 0 6px; height: 25px; line-height: 17px; padding-top: 8px; border-bottom: 1px solid #4c4c4c; color: #000; letter-spacing: -.23px; -webkit-text-stroke: .6px #000; }
.two { display: grid; grid-template-columns: 174px 173px; gap: 4px; margin-bottom: 4px; }
.three { display: grid; grid-template-columns: 114px 115px 114px; height: 26px; gap: 4px; }
.three span { padding-top: 1px; }
.three .rg { width: 16px; }
.slider { width: 128px; display: flex; align-items: center; margin-right: 7px; }
.slider i { order: 2; flex: 1; height: 4px; border: 1px solid #909090; border-radius: 2px; background: #f4f4f4; }
.slider svg { width: 11px; height: 16px; order: 1; }
.slider.end svg { order: 3; }
.val { width: 128px; background: #fff; padding-top: 3px; }

.sbar { width: 16px; display: flex; flex-direction: column; flex: none; }
.sbar b { height: 16px; border: 1px solid #858585; border-radius: 3px; background: linear-gradient(#f0f0f2, #d0d1d6); display: grid; place-items: center; }
.track { flex: 1; border: 1px dotted #c4c4c4; border-width: 0 1px; background: repeating-conic-gradient(#fbfbfb 0 25%, #e8e8e8 0 50%) 0 0/2px 2px; }
.handle { margin: 0 -1px; border: 1px solid #858585; border-radius: 2px; background: linear-gradient(90deg, #e6e7ec, #c8c9d0); display: grid; place-items: center; }
.handle i { width: 11px; height: 19px; background: radial-gradient(circle at 1px 1px, #aaa 1px, transparent 1.3px) 0 0/4px 4px; }
.h1 { height: 70px; margin-top: 68px; } .h2 { height: 227px; } .h3 { height: 46px; }

.view { width: 528px; padding-left: 11px; flex: none; }
.canvas { width: 516px; height: 573px; border: 1px solid #999; padding: 1px; display: flex; align-items: flex-end; background: linear-gradient(#303240, #52576e); box-shadow: inset 0 0 0 1px #bbb, inset 0 0 0 3px #0000f8, inset 0 0 0 4px #fff; }
.canvas svg { margin: 0 0 3px 2px; }
.tick { font: 8px "Liberation Sans", sans-serif; fill: #f4f4f4; }

.right { flex: 1; padding-left: 14px; padding-right: 8px; display: flex; flex-direction: column; min-width: 0; }
.right .docktitle { margin: 0 -8px 0 -8px; }
.t3 { margin: 0 2px; }
.right .searchrow { margin-top: 9px; height: 25px; }
.right .searchrow .field { padding-left: 4px; }
.arr { height: 26px; padding-top: 7px; }
.right .scroll { height: 483px; }
.cme { width: 356px; }
.chk { height: 25px; display: flex; align-items: center; gap: 5px; }
.cme .chk { margin-top: -1px; margin-bottom: 1px; }
.chk i { width: 13px; height: 13px; border: 1px solid #858585; background: linear-gradient(#f2f2f2, #fff); display: grid; place-items: center; }
.chk svg { width: 9px; height: 9px; }
.chk.off { color: #909090; text-shadow: 1px 1px #fafafa; } .chk.off i { background: #efefef; }
.chk.tall { height: 27px; } .cme .chk.first { margin-top: 3px; }
.cme h4 { height: 22px; padding-top: 5px; }
.cme h4.h22 { height: 21px; padding-top: 4px; }
.mapping { display: flex; gap: 2px; height: 208px; }
.side { display: flex; flex-direction: column; gap: 1px; }
.side .gap { margin-top: 1px; }
.datarow, .spacerow { display: flex; align-items: center; margin-top: 6px; }
.datarow label { width: 36px; padding-top: 1px; } .datarow .field { flex: 1; background: #efefef; }
.spacerow label { width: 97px; padding-bottom: 4px; } .spacerow .combo { flex: 1; }
.hr { height: 2px; margin-top: 4px; border-top: 1px solid #4c4c4c; background: #fff; }
.cme .below { height: 39px; margin: 0; }
.sbar.r { padding-top: 1px; }

.status { height: 26px; flex: none; border-top: 2px solid #858585; border-bottom: 2px solid #999; display: flex; padding-left: 647px; gap: 1px; }
.abort { width: 22px; height: 21px; border: 1px solid #999; border-radius: 3px; display: grid; place-items: center; background: #e6e6e8; }
.abort svg { width: 9px; height: 9px; }
.progress { width: 624px; border: 1px solid #858585; border-radius: 3px; }

.dialog { position: absolute; left: 374px; top: 66px; width: 547px; height: 579px; border-radius: 7px 7px 0 0; background: #efefef; box-shadow: 0 8px 30px 2px rgba(0,0,0,.62), 0 2px 8px rgba(0,0,0,.25); overflow: visible; }
.dtitle { height: 28px; border-radius: 7px 7px 0 0; background: linear-gradient(#5b5a51, #3e3d38); display: flex; align-items: center; color: #dfdbd2; font: bold 14px/20px "Open Sans", sans-serif; padding-left: 8px; letter-spacing: .35px; }
.dtitle span { padding-top: 1px; }
.close, .max { width: 15px; height: 15px; border-radius: 50%; display: grid; place-items: center; }
.close { background: #e8602f; border: 1px solid #9c3c1c; } .close svg { width: 6px; height: 6px; opacity: .75; }
.max { margin: 0 12px 0 4px; background: #777669; border: 1px solid #33322e; }
.max::after { content: ""; width: 7px; height: 7px; border: 1px solid #33322e; }
.dbody { display: flex; padding: 11px 11px 0; }
.dl { width: 404px; margin-right: 4px; }
.filter { height: 22px; margin-left: 1px; border: 2px solid #6c95bd; border-top-color: #4c7ba8; border-width: 1.500px; border-radius: 3px; background: #fff; padding: 2px 4px; }
.filter i { width: 1px; height: 16px; background: #000; }
.table { margin-top: 4px; height: 482px; border: 1px solid #858585; border-radius: 3px; background: #fff; display: flex; padding: 1px; overflow: hidden; box-shadow: inset 0 0 0 1px #bbb; }
.rows { width: 384px; height: 477px; overflow: hidden; padding-left: 1px; }
.th { height: 23px; border: 1px solid #858585; background: linear-gradient(#e6e7ec, #ccced4); text-align: center; padding-top: 4px; }
.pr { height: 30px; border-bottom: 1px solid #c4c4c4; display: flex; align-items: center; padding-top: 1px; }
.pr i { width: 180px; height: 20px; align-self: flex-start; margin: 4px 6px 0 2px; }
.p1 { background: linear-gradient(90deg,#3b4cc0,#6788ee 14%,#9abbff 30%,#c9d7f0 44%,#ddd 50%,#edd1c2 58%,#f7a889 72%,#e26952 86%,#b40426); }
.p3 { background: linear-gradient(270deg,#3b4cc0,#6788ee 14%,#9abbff 30%,#c9d7f0 44%,#ddd 50%,#edd1c2 58%,#f7a889 72%,#e26952 86%,#b40426); }
.p2 { background: linear-gradient(90deg,#00005a,#2c5a8c 15%,#6eb4cc 33%,#c8f0f4 46%,#f6f4f0 50%,#f8e4c0 54%,#e89070 66%,#b83c2c 77%,#8c1014 87%,#560c34); }
.p4 { background: linear-gradient(90deg,#56002a,#900810 9%,#d05a20 21%,#e0a838 32%,#f8e47c 46%,#e8f8e8 50%,#98f4d0 56%,#08d0dc 64%,#1078c0 78%,#080c94 92%,#28005c); }
.p5 { background: linear-gradient(90deg,#4747db,#00005c 14.300%,#00ffff 28.500%,#008000 42.900%,#ffff00 57.100%,#ff6100 71.400%,#6b0000 85.700%,#e04d4d); }
.p6 { background: linear-gradient(90deg,#00ffff,#0000ff 45%,#000080 50%,#ff0000 55%,#ffff00); }
.p7 { background: linear-gradient(90deg,#000,#e60000 40%,#e6e600 80%,#fff); }
.p8 { background: linear-gradient(90deg,#fff,#000); }
.p9 { background: linear-gradient(90deg,#000,#fff); }
.p10 { background: linear-gradient(90deg,#000,#000080 33.300%,#0080ff 66.600%,#fff); }
.p11 { background: linear-gradient(90deg,#000,#800000 33.300%,#ff8000 66.600%,#fff); }
.p12 { background: linear-gradient(90deg,#fff,#f8e8c8 7%,#e0dc80 21%,#54b850 36%,#2c9088 55%,#207890 66%,#1c4484 78%,#302874 93%,#483464); }
.p14 { background: linear-gradient(90deg,#f4fffa,#8ce8d4 16%,#60c4c8 36%,#3e8898 55%,#385878 76%,#203050 92%,#241c4c); }
.p15 { background: linear-gradient(90deg,#00f,#0ff 25%,#0f0 50%,#ff0 75%,#f00); }
.p16 { background: linear-gradient(270deg,#00f,#0ff 25%,#0f0 50%,#ff0 75%,#f00); }
.tip { margin-top: 6px; color: #000; letter-spacing: -.17px; -webkit-text-stroke: .55px #000; }
.dr { width: 117px; }
h4.opt { height: 21px; padding: 0; margin-bottom: 4px; }
.dbtns { display: flex; flex-direction: column; gap: 4px; margin-top: 263px; }
.dbtns .btn { height: 26px; padding-top: 2px; }
.tooltip { position: absolute; left: 758px; top: 567px; width: 107px; height: 21px; border: 1px solid #000; background: #ffffdc; padding: 2px 0 0 2px; color: #000; box-shadow: 0 4px 14px 4px rgba(0,0,0,.32); }
```
